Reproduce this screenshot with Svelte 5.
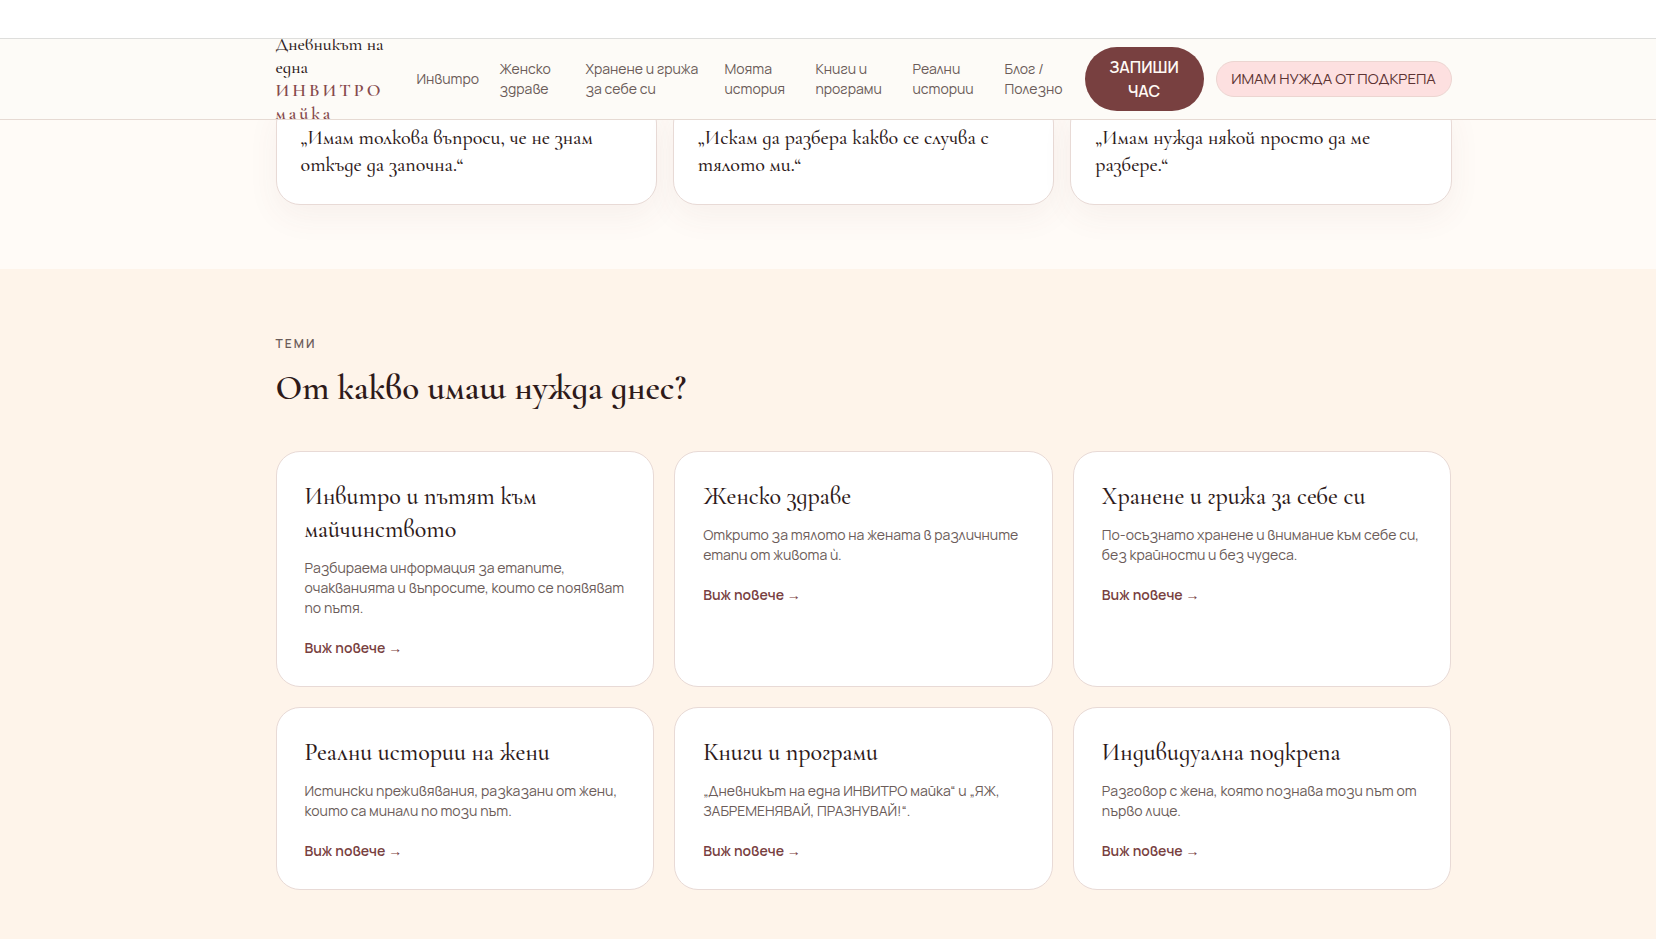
<script>
    const navLinks = [
        'Инвитро',
        'Женско здраве',
        'Хранене и грижа за себе си',
        'Моята история',
        'Книги и програми',
        'Реални истории',
        'Блог / Полезно'
    ];

    const quotes = [
        '„Имам толкова въпроси, че не знам откъде да започна.“',
        '„Искам да разбера какво се случва с тялото ми.“',
        '„Имам нужда някой просто да ме разбере.“'
    ];

    const topics = [
        {
            title: 'Инвитро и пътят към майчинството',
            text: 'Разбираема информация за етапите, очакванията и въпросите, които се появяват по пътя.'
        },
        {
            title: 'Женско здраве',
            text: 'Открито за тялото на жената в различните етапи от живота ѝ.'
        },
        {
            title: 'Хранене и грижа за себе си',
            text: 'По-осъзнато хранене и внимание към себе си, без крайности и без чудеса.'
        },
        {
            title: 'Реални истории на жени',
            text: 'Истински преживявания, разказани от жени, които са минали по този път.'
        },
        {
            title: 'Книги и програми',
            text: '„Дневникът на една ИНВИТРО майка“ и „ЯЖ, ЗАБРЕМЕНЯВАЙ, ПРАЗНУВАЙ!“.'
        },
        {
            title: 'Индивидуална подкрепа',
            text: 'Разговор с жена, която познава този път от първо лице.'
        }
    ];
</script>

<div class="page" lang="bg">
    <div class="topbar"></div>

    <header>
        <div class="container header-row">
            <a class="logo" href="#home">Дневникът на една <span>ИНВИТРО майка</span></a>
            <nav>
                {#each navLinks as link}
                <a href="#nav">{link}</a>
                {/each}
            </nav>
            <div class="actions">
                <button class="book">ЗАПИШИ ЧАС</button>
                <button class="support">ИМАМ НУЖДА ОТ ПОДКРЕПА</button>
            </div>
        </div>
    </header>

    <section class="quotes">
        <div class="container quote-grid">
            {#each quotes as quote}
            <blockquote>{quote}</blockquote>
            {/each}
        </div>
    </section>

    <section class="topics">
        <div class="container">
            <p class="eyebrow">ТЕМИ</p>
            <h2>От какво имаш нужда днес?</h2>
            <div class="topic-grid">
                {#each topics as topic}
                <article>
                    <h3>{topic.title}</h3>
                    <p>{topic.text}</p>
                    <a href="#topic">Виж повече <span>→</span></a>
                </article>
                {/each}
            </div>
        </div>
    </section>
</div>

<style>
    :global(body) {
        background: #fef4ea;
        overflow: hidden;
    }

    .page {
        --serif: 'Cormorant Garamond', 'Liberation Serif', serif;
        --ink: #2e1a1a;
        --muted: #6b5c59;
        --wine: #784040;
        --line: #e8dad6;
        color: var(--ink);
        font-family: Manrope, Inter, sans-serif;
        font-size: 14px;
        line-height: 20px;
    }

    a {
        color: inherit;
        text-decoration: none;
    }

    .container {
        max-width: 1176px;
        margin: 0 auto;
    }

    header,
    section {
        padding-left: 71px;
    }

    .topbar {
        height: 38px;
        background: #fff;
        border-bottom: 1px solid #dededc;
    }

    /* The header floats over the quote cards and clips the tall logo */
    header {
        position: relative;
        z-index: 2;
        overflow: hidden;
        background: #fdfbf7;
        border-bottom: 1px solid #e6dad3;
    }

    .header-row {
        display: flex;
        align-items: center;
        height: 80px;
    }

    .logo {
        flex: 0 0 109px;
        margin-right: 32px;
        font-family: var(--serif);
        font-size: 18px;
        font-weight: 500;
        line-height: 23px;
    }

    .logo span {
        display: block;
        color: #864a4c;
        font-weight: 600;
        letter-spacing: 3px;
    }

    nav {
        flex: 1;
        display: grid;
        grid-template-columns: 63fr 66fr 119fr 71fr 77fr 72fr 60fr;
        gap: 20px;
        align-items: center;
        color: var(--muted);
    }

    .actions {
        display: flex;
        align-items: center;
        gap: 12px;
        margin-left: 20px;
    }

    button {
        font-family: inherit;
        cursor: pointer;
    }

    .book {
        width: 119px;
        padding: 8px 16px;
        border: 0;
        border-radius: 32px;
        background: var(--wine);
        color: #fffaf5;
        font-size: 16px;
        font-weight: 600;
        line-height: 24px;
    }

    .support {
        width: 236px;
        padding: 7px 0;
        border: 1px solid #ecd5d1;
        border-radius: 18px;
        background: #fde0e0;
        color: #5c3333;
        font-size: 15px;
        font-weight: 400;
        line-height: 20px;
        white-space: nowrap;
    }

    .quotes {
        display: flow-root;
        padding-bottom: 64px;
        background: #fffbf7;
    }

    .quote-grid {
        display: grid;
        grid-template-columns: repeat(3, 1fr);
        gap: 16px;
        margin-top: -21px;
    }

    blockquote {
        margin: 0;
        padding: 25px 24px;
        background: #fff;
        border: 1px solid var(--line);
        border-radius: 24px;
        box-shadow: 0 12px 32px rgba(120, 64, 64, 0.06);
        font-family: var(--serif);
        font-size: 20px;
        font-weight: 500;
        line-height: 27px;
    }

    .topics {
        padding-top: 64px;
        padding-bottom: 64px;
        background: #fef4ea;
    }

    .eyebrow {
        margin: 0 0 10px;
        color: var(--muted);
        font-size: 12px;
        font-weight: 600;
        letter-spacing: 2px;
        line-height: 22px;
    }

    h2 {
        margin: 0 0 40px;
        font-family: var(--serif);
        font-size: 35px;
        font-weight: 600;
        line-height: 46px;
    }

    .topic-grid {
        display: grid;
        grid-template-columns: repeat(3, 1fr);
        gap: 20px;
    }

    article {
        padding: 28px;
        background: #fff;
        border: 1px solid var(--line);
        border-radius: 24px;
    }

    h3 {
        margin: 0 0 12px;
        font-family: var(--serif);
        font-size: 24px;
        font-weight: 500;
        line-height: 33px;
    }

    article p {
        margin: 0 0 20px;
        color: var(--muted);
    }

    article a {
        display: block;
        color: var(--wine);
        font-weight: 600;
    }

    article a span {
        font-family: 'Liberation Sans', sans-serif;
        font-weight: 400;
        line-height: 1;
    }
</style>
